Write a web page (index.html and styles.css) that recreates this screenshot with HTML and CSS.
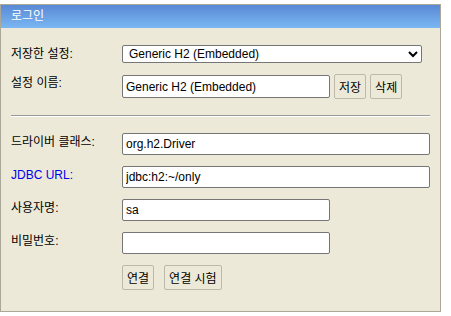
FILE: index.html
```html
<!DOCTYPE html>
<html lang="ko">
<head>
  <meta charset="UTF-8">
  <title>로그인</title>
  <link rel="stylesheet" href="styles.css">
</head>
<body>

<div class="login">
  <div class="login-title">로그인</div>

  <div class="login-body">
    <!-- 저장된 설정 -->
    <div class="row first">
      <label class="lbl">저장한 설정:</label>
      <select class="setting">
        <option>Generic H2 (Embedded)</option>
      </select>
    </div>
    <div class="row">
      <label class="lbl">설정 이름:</label>
      <div class="inline">
        <input type="text" class="short" value="Generic H2 (Embedded)">
        <button class="btn">저장</button>
        <button class="btn">삭제</button>
      </div>
    </div>

    <hr>

    <!-- 접속 정보 -->
    <div class="row">
      <label class="lbl">드라이버 클래스:</label>
      <input type="text" class="long" value="org.h2.Driver">
    </div>
    <div class="row">
      <label class="lbl link">JDBC URL:</label>
      <input type="text" class="long" value="jdbc:h2:~/only">
    </div>
    <div class="row">
      <label class="lbl">사용자명:</label>
      <input type="text" class="short" value="sa">
    </div>
    <div class="row">
      <label class="lbl">비밀번호:</label>
      <input type="password" class="short" value="">
    </div>
    <div class="row">
      <span class="lbl"></span>
      <div class="actions">
        <button class="btn">연결</button>
        <button class="btn">연결 시험</button>
      </div>
    </div>
  </div>
</div>

</body>
</html>
```

FILE: styles.css
```css
body { margin: 0; background: #fff; font-family: "Liberation Sans", "Noto Sans CJK KR", sans-serif; font-size: 12px; color: #000; }
.login { margin-top: 4px; width: 439px; border: 1px solid #aca899; background: #ece9d8; }
.login-title { height: 23px; line-height: 23px; padding-left: 10px; color: #fff; background: linear-gradient(#5a89d5, #7ab7f3); }
.login-body { padding: 17px 10px 21px 10px; }
.row { display: flex; align-items: flex-start; margin-top: 11px; }
.row.first { margin-top: 0; }
.lbl { width: 111px; flex: none; line-height: 16px; padding-top: 1px; }
.link { color: #0000ee; }
input, select, button { font-family: "Liberation Sans", "Noto Sans CJK KR", sans-serif; font-size: 12px; color: #000; box-sizing: border-box; margin: 0; }
input { height: 22px; padding: 1px 3px; border: 1px solid #767676; border-radius: 2px; background: #fff; }
.long { width: 308px; }
.short { width: 208px; }
.setting { width: 300px; height: 18px; padding: 0 2px; border: 1px solid #767676; border-radius: 2px; background: #fff; }
.inline { display: flex; align-items: center; gap: 4px; }
.inline input { height: 23px; }
.btn { height: 25px; padding: 0 4px; border: 1px solid #bcb9ac; border-radius: 2px; background: #ece9d8; }
.actions { display: flex; gap: 10px; }
hr { margin: 16px 0; border: 0; border-top: 1px solid #999; border-bottom: 1px solid #fff; height: 0; }
```
